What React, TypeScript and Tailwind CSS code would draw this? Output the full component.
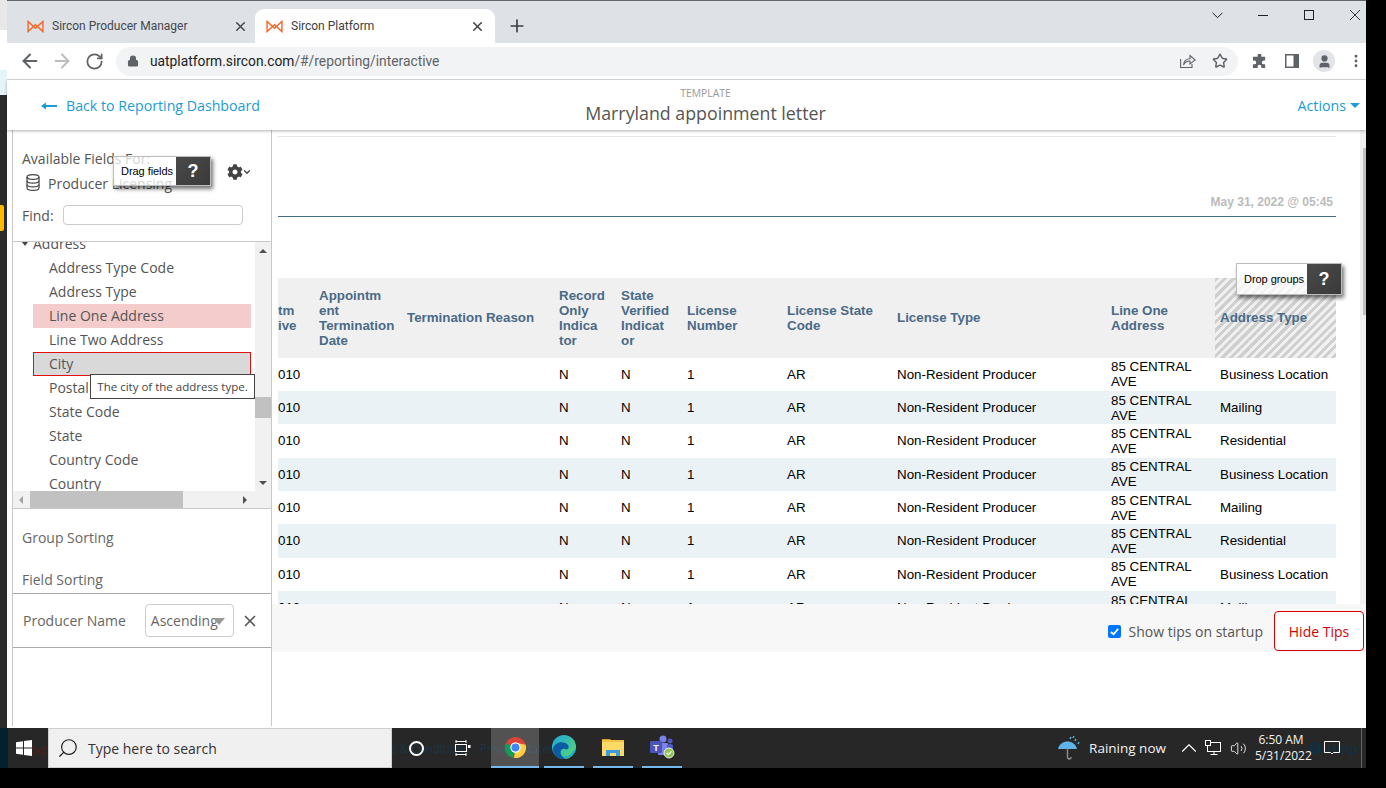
import React from 'react';
import {
  ArrowLeft,
  ArrowRight,
  ChevronDown,
  ChevronUp,
  EllipsisVertical,
  Lock,
  Plus,
  RotateCw,
  Search,
  Star,
  User,
  Volume2,
  X,
} from 'lucide-react';
import { FaCog } from 'react-icons/fa';

const openSans = "[font-family:'Open_Sans',sans-serif]";

const SirconLogo = ({ className = '' }: { className?: string }) => (
  <svg viewBox="0 0 18 14" className={className} fill="none" stroke="currentColor" strokeWidth="1.5">
    <path d="M1 1.5 L1 12.5 L9 5 L17 12.5 L17 1.5 L9 9 Z" />
  </svg>
);

const fields = ['Address Type Code', 'Address Type', 'Line One Address', 'Line Two Address', 'City', 'Postal', 'State Code', 'State', 'Country Code', 'Country'];

const rowTypes = ['Business Location', 'Mailing', 'Residential', 'Business Location', 'Mailing', 'Residential', 'Business Location', 'Mailing'];

const gridCols = 'grid grid-cols-[36px_88px_152px_62px_66px_100px_110px_214px_109px_121px]';

const Tip = ({ label, className }: { label: string; className: string }) => (
  <div className={`absolute flex border border-[#bdbdbd] bg-white/75 shadow-[2px_3px_4px_rgba(0,0,0,0.55)] ${className}`}>
    <div className="flex-1 flex items-center pl-[7px] text-[11px] text-black [font-family:'Liberation_Sans',sans-serif] tracking-[-0.05px] whitespace-nowrap">{label}</div>
    <div className="w-[34px] flex items-center justify-center bg-gradient-to-br from-[#4a4a4a] to-[#3a3a3a] text-white text-[18px] font-bold [font-family:'Liberation_Sans',sans-serif]">?</div>
  </div>
);

const Header = ({ children, className = '' }: { children: React.ReactNode; className?: string }) => (
  <div className={`flex items-center pl-[5px] pb-[0.6px] text-[13.33px] leading-[15px] font-bold text-[#4a6a88] ${className}`}>
    <div>{children}</div>
  </div>
);

const BrowserChrome = () => (
  <>
    <div className="h-[43px] bg-[#dee1e6] border-t border-[#666] flex items-end relative">
      <div className="w-[248px] h-[34px] flex items-center text-[12px] text-[#45484d] [font-family:Roboto,sans-serif]">
        <SirconLogo className="w-[17px] h-[13px] ml-[20px] text-[#f2682a]" />
        <span className="ml-[8px]">Sircon Producer Manager</span>
        <X size={15} strokeWidth={2.4} className="ml-auto mr-[7px] text-[#45484d]" />
      </div>
      <div className="w-[240px] h-[34px] bg-white rounded-t-[9px] flex items-center text-[12px] text-[#3c4043] [font-family:Roboto,sans-serif]">
        <SirconLogo className="w-[17px] h-[13px] ml-[11px] text-[#f2682a]" />
        <span className="ml-[8px]">Sircon Platform</span>
        <X size={15} strokeWidth={2.4} className="ml-auto mr-[10px] text-[#3c4043]" />
      </div>
      <Plus size={20} strokeWidth={2} className="ml-[12px] mb-[7px] text-[#3c4043]" />
      <div className="ml-auto h-[28px] self-start flex items-center text-[#222]">
        <div className="w-[46px] flex justify-center">
          <svg viewBox="0 0 10 6" className="w-[11px] h-[7px]" fill="none" stroke="currentColor" strokeWidth="0.9"><path d="M0.5 0.5 L5 5 L9.5 0.5" /></svg>
        </div>
        <div className="w-[46px] flex justify-center">
          <div className="w-[10px] h-[1px] bg-[#222]" />
        </div>
        <div className="w-[46px] flex justify-center">
          <div className="w-[10px] h-[10px] border border-[#222]" />
        </div>
        <div className="w-[34px] pl-[18px]">
          <svg viewBox="0 0 10 10" className="w-[10px] h-[10px]" fill="none" stroke="currentColor" strokeWidth="0.9"><path d="M0 0 L10 10 M10 0 L0 10" /></svg>
        </div>
      </div>
    </div>
    <div className="h-[37px] bg-white border-b border-[#dadce0] flex items-center">
      <div className="w-[32px] ml-[7px] flex justify-center"><ArrowLeft size={22} strokeWidth={2.2} className="text-[#5f6368]" /></div>
      <div className="w-[32px] flex justify-center"><ArrowRight size={22} strokeWidth={2.2} className="text-[#bcbdbf]" /></div>
      <div className="w-[32px] flex justify-center"><RotateCw size={19} strokeWidth={2.2} className="text-[#5f6368]" /></div>
      <div className="ml-[6px] w-[1122px] h-[29px] rounded-full bg-[#f1f3f4] flex items-center">
        <Lock size={12} fill="#5f6368" strokeWidth={2.2} className="ml-[11px] text-[#5f6368]" />
        <span className="ml-[11px] text-[13.8px] text-[#202124] [font-family:Roboto,sans-serif]">
          uatplatform.sircon.com<span className="text-[#5f6368]">/#/reporting/interactive</span>
        </span>
        <svg viewBox="0 0 16 16" className="ml-auto w-[16px] h-[16px] text-[#5f6368]" fill="none" stroke="currentColor" strokeWidth="1.1">
          <path d="M0.6 6 V14.5 H12 V11" />
          <path d="M3.5 12 C4 7.5 7 5.8 10 5.8 V2.5 L15.2 7 L10 11 V8 C7.5 8 5 9 3.5 12 Z" />
        </svg>
        <Star size={16} strokeWidth={2.2} className="ml-[16px] mr-[10px] text-[#5f6368]" />
      </div>
      <svg viewBox="0 0 16 16" className="ml-[14px] w-[15px] h-[15px] text-[#5f6368]" fill="currentColor">
        <path d="M6 1.5a2 2 0 0 1 4 0V3h4v4h-1.5a2 2 0 0 0 0 4H14v4h-4v-1.5a2 2 0 0 0-4 0V15H1v-4h1.5a2 2 0 0 0 0-4H1V3h5z" />
      </svg>
      <svg viewBox="0 0 14 14" className="ml-[18px] w-[14px] h-[14px]">
        <rect width="14" height="14" fill="#5f6368" />
        <rect x="1.5" y="1.5" width="7" height="11" fill="#fff" />
      </svg>
      <div className="ml-[14px] w-[22px] h-[22px] rounded-full bg-[#e2e4e8] flex items-center justify-center">
        <User size={15} fill="#5f6368" className="text-[#5f6368]" />
      </div>
      <EllipsisVertical size={16} strokeWidth={2.4} className="ml-[13px] text-[#5f6368]" />
    </div>
  </>
);

const AppHeader = () => (
  <div className={`h-[50px] pt-[2px] bg-white relative z-10 shadow-[0_1px_3px_rgba(0,0,0,0.3)] flex items-center justify-between ${openSans}`}>
    <div className="flex items-center ml-[34px] text-[#1b9cd8] text-[14.2px]">
      <svg viewBox="0 0 16 8" className="w-[16px] h-[8px]" fill="currentColor">
        <path d="M0 4 L5 0.5 V3 H16 V5 H5 V7.5 Z" />
      </svg>
      <span className="ml-[9px]">Back to Reporting Dashboard</span>
    </div>
    <div className="absolute left-[38px] right-0 top-0 text-center pointer-events-none">
      <div className="text-[10.4px] leading-[13px] mt-[7px] text-[#999]">TEMPLATE</div>
      <div className="text-[17.8px] leading-[26px] text-[#555]">Marryland appoinment letter</div>
    </div>
    <div className="flex items-center mr-[6px] text-[#1b9cd8] text-[14.2px]">
      Actions
      <span className="ml-[4px] w-0 h-0 border-x-[5px] border-x-transparent border-t-[5px] border-t-[#1b9cd8]" />
    </div>
  </div>
);

const Sidebar = () => (
  <div className={`w-[260px] mb-[2px] ml-[5px] border-x border-[#c8c8c8] bg-white flex flex-col relative text-[14px] text-[#555] ${openSans}`}>
    <div className="h-[112px] border-b border-[#c8c8c8] relative">
      <div className="absolute left-[9px] top-[19px] leading-[20px]">Available Fields For:</div>
      <svg viewBox="0 0 14 17" className="absolute left-[13px] top-[44px] w-[14px] h-[17px] text-[#444]" fill="none" stroke="currentColor" strokeWidth="1.2">
        <ellipse cx="7" cy="3" rx="6" ry="2.4" />
        <path d="M1 3 V14 C1 15.4 3.7 16.4 7 16.4 C10.3 16.4 13 15.4 13 14 V3" />
        <path d="M1 6.8 C1 8.2 3.7 9.2 7 9.2 C10.3 9.2 13 8.2 13 6.8" />
        <path d="M1 10.4 C1 11.8 3.7 12.8 7 12.8 C10.3 12.8 13 11.8 13 10.4" />
      </svg>
      <div className="absolute left-[35px] top-[44px] leading-[20px]">Producer Licensing</div>
      <FaCog size={16} className="absolute left-[214px] top-[34px] text-[#444]" />
      <ChevronDown size={10} strokeWidth={3} className="absolute left-[229px] top-[37px] text-[#444]" />
      <div className="absolute left-[9px] top-[76px] leading-[20px]">Find:</div>
      <div className="absolute left-[50px] top-[75px] w-[180px] h-[20px] rounded-[4px] border border-[#ccc]" />
      <Tip label="Drag fields" className="left-[100px] top-[26px] w-[98px] h-[30px]" />
    </div>
    <div className="h-[267px] border-b border-[#c8c8c8] flex flex-col">
      <div className="h-[249px] flex overflow-hidden">
        <div className="flex-1 overflow-hidden">
          <div className="-mt-[10px] h-[24px] pb-[1px] flex items-center pl-[9px]">
            <span className="w-0 h-0 border-x-[3px] border-x-transparent border-t-[4px] border-t-[#444]" />
            <span className="ml-[5px]">Address</span>
          </div>
          {fields.map((f) => (
            <div
              key={f}
              className={`ml-[20px] mr-[4px] h-[24px] pb-[1px] flex items-center ${
                f === 'Line One Address'
                  ? 'bg-[#f4cccc] pl-[16px]'
                  : f === 'City'
                  ? 'bg-[#d9d9d9] border border-[#e01010] pl-[15px]'
                  : 'pl-[16px]'
              }`}
            >
              {f}
            </div>
          ))}
        </div>
        <div className="w-[16px] bg-[#f1f1f1] relative flex flex-col items-center">
          <span className="absolute top-[7px] w-0 h-0 border-x-[4px] border-x-transparent border-b-[4px] border-b-[#505050]" />
          <div className="absolute top-[155px] w-[16px] h-[21px] bg-[#c1c1c1]" />
          <span className="absolute bottom-[6px] w-0 h-0 border-x-[4px] border-x-transparent border-t-[4px] border-t-[#505050]" />
        </div>
      </div>
      <div className="h-[17px] bg-[#f1f1f1] flex items-center relative">
        <span className="ml-[6px] w-0 h-0 border-y-[4px] border-y-transparent border-r-[4px] border-r-[#a3a3a3]" />
        <div className="ml-[7px] w-[153px] h-[17px] bg-[#c1c1c1]" />
        <span className="ml-[60px] w-0 h-0 border-y-[4px] border-y-transparent border-l-[4px] border-l-[#505050]" />
      </div>
    </div>
    <div className="h-[39px] flex items-end pl-[9px] text-[#666] leading-[20px]">Group Sorting</div>
    <div className="h-[42px] flex items-end pl-[9px] text-[#666] leading-[20px]">Field Sorting</div>
    <div className="h-[55px] mt-[3px] border-y border-[#aaa] flex items-center pl-[10px] text-[#666]">
      <span>Producer Name</span>
      <div className="ml-[19px] w-[89px] h-[33px] rounded-[4px] border border-[#ccc] flex items-center pl-[5px] relative">
        Ascending
        <span className="absolute right-[8px] top-[13px] w-0 h-0 border-x-[6px] border-x-transparent border-t-[7px] border-t-[#999]" />
      </div>
      <X size={18} strokeWidth={2.2} className="ml-[7px] text-[#555]" />
    </div>
    <div className="absolute left-[77px] top-[244px] h-[25px] w-[165px] bg-white border border-[#444] flex items-center justify-center text-[11.5px] text-[#444]">
      The city of the address type.
    </div>
  </div>
);

const ReportTable = () => (
  <div className="[font-family:'Liberation_Sans',sans-serif] text-[13.33px] leading-[15px] text-black">
    <div className={`${gridCols} h-[79.6px] bg-[#f0f0f0]`}>
      <Header className="!pl-0">tm<br />ive</Header>
      <Header>Appointm<br />ent<br />Termination<br />Date</Header>
      <Header>Termination Reason</Header>
      <Header>Record<br />Only<br />Indica<br />tor</Header>
      <Header>State<br />Verified<br />Indicat<br />or</Header>
      <Header>License<br />Number</Header>
      <Header>License State<br />Code</Header>
      <Header>License Type</Header>
      <Header>Line One<br />Address</Header>
      <Header className="bg-[repeating-linear-gradient(135deg,#cfcfcf_0,#cfcfcf_3px,#f0f0f0_3px,#f0f0f0_6px)]">Address Type</Header>
    </div>
    {rowTypes.map((type, i) => (
      <div key={i} className={`${gridCols} h-[33.33px] items-center ${i % 2 === 1 ? 'bg-[#ebf2f6]' : 'bg-white'}`}>
        <div>010</div>
        <div />
        <div />
        <div className="pl-[5px]">N</div>
        <div className="pl-[5px]">N</div>
        <div className="pl-[5px]">1</div>
        <div className="pl-[5px]">AR</div>
        <div className="pl-[5px]">Non-Resident Producer</div>
        <div className="pl-[5px]">85 CENTRAL<br />AVE</div>
        <div className="pl-[5px]">{type}</div>
      </div>
    ))}
  </div>
);

const Main = () => (
  <div className="flex-1 flex flex-col bg-white min-w-0">
    <div className="h-[474px] flex overflow-hidden relative">
      <div className="w-[1082px] ml-[6px] pt-[6px] overflow-hidden">
        <div className="h-[81px] border-t border-t-[#e5e5e5] border-b border-b-[#3f6b8c] w-[1058px] flex items-end justify-end pr-[3px] pb-[5px] text-[12px] font-bold text-[#bbb] [font-family:'Liberation_Sans',sans-serif]">
          May 31, 2022 @ 05:45
        </div>
        <div className="mt-[61px] w-[1058px]">
          <ReportTable />
        </div>
      </div>
      <div className="w-[6px] bg-[#f1f1f1] flex justify-end">
        <div className="w-[3px] h-[167px] mt-[18px] bg-[#c1c1c1]" />
      </div>
      <Tip label="Drop groups" className="left-[964px] top-[133px] w-[106px] h-[32px]" />
    </div>
    <div className="h-[48px] bg-[#f7f7f7] flex items-center relative">
      <div className={`ml-auto mr-[11px] pt-[6px] flex items-center text-[14px] text-[#555] ${openSans}`}>
        <span className="w-[13px] h-[13px] rounded-[2px] bg-[#0075ff] flex items-center justify-center">
          <svg viewBox="0 0 12 12" className="w-[11px] h-[11px]" fill="none" stroke="#fff" strokeWidth="2">
            <path d="M2 6.5 L5 9 L10 3" />
          </svg>
        </span>
        <span className="ml-[7px]">Show tips on startup</span>
      </div>
      <div className={`mr-[2px] mt-[3px] -mb-[3px] w-[90px] h-[40px] rounded-[4px] border border-[#d40000] bg-white flex items-center justify-center text-[14px] text-[#d40000] ${openSans}`}>
        Hide Tips
      </div>
    </div>
    <div className="flex-1" />
  </div>
);

const ChromeIcon = () => (
  <svg viewBox="0 0 24 24" className="w-[23px] h-[23px]">
    <circle cx="12" cy="12" r="11" fill="#db4437" />
    <path d="M12 12 L1.9 7.5 A11 11 0 0 0 10.5 22.9 Z" fill="#0f9d58" />
    <path d="M12 12 L10.5 22.9 A11 11 0 0 0 22.6 9 L12 7 Z" fill="#ffcd40" />
    <circle cx="12" cy="12" r="5.4" fill="#fff" />
    <circle cx="12" cy="12" r="4.2" fill="#4285f4" />
  </svg>
);

const EdgeIcon = () => (
  <svg viewBox="0 0 24 24" className="w-[24px] h-[24px]">
    <defs>
      <linearGradient id="edgeTop" x1="0" y1="0" x2="1" y2="1">
        <stop offset="0" stopColor="#1aa5dc" />
        <stop offset="1" stopColor="#5ddc6c" />
      </linearGradient>
    </defs>
    <circle cx="12" cy="12" r="12" fill="url(#edgeTop)" />
    <path d="M1 14 C2 7 12 5 16 10 C18 13 15 15 13 14 C9 13 7 17 10 21 C11 22.5 13 24 15 23.6 C8 25.5 1 21 1 14Z" fill="#0c59a4" />
    <path d="M24 14 C22 21 15 25 10 21 C13 22 19 21 21 16Z" fill="#1aa5dc" />
  </svg>
);

const FolderIcon = () => (
  <svg viewBox="0 0 22 20" className="w-[22px] h-[20px]">
    <path d="M0 2 H8 L10 4 H0 Z" fill="#d9a01f" />
    <rect x="0" y="3" width="22" height="16" fill="#ffd966" />
    <rect x="0" y="3" width="22" height="2" fill="#f0c24a" />
    <path d="M4 19 V13 H18 V19 H14 V16 H8 V19 Z" fill="#3b9ae0" />
  </svg>
);

const TeamsIcon = () => (
  <svg viewBox="0 0 26 24" className="w-[26px] h-[24px]">
    <circle cx="14" cy="4" r="3.5" fill="#7b83eb" />
    <circle cx="21" cy="6" r="2.5" fill="#5059c9" />
    <rect x="9" y="8" width="10" height="12" rx="1" fill="#7b83eb" />
    <rect x="18" y="9" width="6" height="9" rx="2" fill="#5059c9" />
    <rect x="1" y="6" width="12" height="12" rx="1" fill="#4b53bc" />
    <text x="7" y="15.5" textAnchor="middle" fontSize="9" fontWeight="700" fill="#fff" fontFamily="Liberation Sans">T</text>
    <circle cx="20" cy="18" r="5" fill="#92c353" stroke="#fff" strokeWidth="0.8" />
    <path d="M17.7 18 L19.4 19.7 L22.4 16.4" fill="none" stroke="#fff" strokeWidth="1.2" />
  </svg>
);

const TaskButton = ({ w, ml, active, children }: { w: string; ml: string; active?: boolean; children: React.ReactNode }) => (
  <div className={`relative h-[40px] flex items-center justify-center border-b-2 border-[#76b9ed] ${w} ${ml} ${active ? 'bg-white/20' : ''}`}>
    {children}
  </div>
);

const Taskbar = () => (
  <div className={`h-[40px] w-[1366px] bg-[#272727] flex items-stretch relative text-white ${openSans}`}>
    <div className="absolute left-[391px] top-[12px] text-[11.7px] text-[#1a3545] whitespace-nowrap">
      s &amp; Conditions<span className="ml-[10px]">Privacy Statement</span>
    </div>
    <div className="absolute left-[1309px] top-[10px] flex items-center text-[14px] font-semibold text-[#12303f] whitespace-nowrap">
      <span className="w-[13px] h-[13px] mr-[5px] rounded-full bg-[#12303f] text-[#272727] text-[10px] leading-[13px] text-center">?</span>
      Help
    </div>
    <SirconLogo className="absolute left-[28px] top-[17px] w-[20px] h-[12px] text-[#4a2018]" />
    <div className="w-[8px] bg-[#04202e]" />
    <div className="w-[40px] flex items-center pl-[8px] relative">
      <svg viewBox="0 0 16 16" className="w-[16px] h-[16px]" fill="#fff">
        <path d="M0 2.3 L7 1.3 V7.5 H0Z M8 1.1 L16 0 V7.5 H8Z M0 8.5 H7 V14.7 L0 13.7Z M8 8.5 H16 V16 L8 14.9Z" />
      </svg>
    </div>
    <div className="relative w-[344px] bg-[#f0f0f0] border border-[#cfcfcf] flex items-center text-[#333] text-[14px]">
      <Search size={22} strokeWidth={1.3} className="ml-[8px] -scale-x-100 text-[#222]" />
      <span className="ml-[9px]">Type here to search</span>
    </div>
    <div className="relative flex items-center ml-[17px]">
      <span className="w-[15px] h-[15px] rounded-full border-2 border-white" />
    </div>
    <div className="relative flex items-center ml-[31px]">
      <svg viewBox="0 0 16 16" className="w-[16px] h-[16px]" fill="none" stroke="#fff" strokeWidth="1">
        <path d="M1 1.5 H11 M1 14.5 H11 M11 0 V3 M11 13 V16 M1 0 V3 M1 13 V16" />
        <rect x="0.5" y="4.5" width="11" height="7" />
        <rect x="13" y="5" width="2.5" height="3" fill="#fff" stroke="none" />
      </svg>
    </div>
    <TaskButton w="w-[48px]" ml="ml-[20px]" active><ChromeIcon /></TaskButton>
    <TaskButton w="w-[40px]" ml="ml-[5px]"><EdgeIcon /></TaskButton>
    <TaskButton w="w-[40px]" ml="ml-[9px]"><FolderIcon /></TaskButton>
    <TaskButton w="w-[40px]" ml="ml-[9px]"><TeamsIcon /></TaskButton>
    <div className="ml-auto flex items-center relative">
      <svg viewBox="0 0 24 26" className="w-[24px] h-[26px] mr-[8px]">
        <path d="M1 14 C3 4 18 4 20 14 Z" fill="#5fb3e8" />
        <path d="M10.5 13 V22 C10.5 24.5 14 24.5 14 22" stroke="#8c8c8c" strokeWidth="1.5" fill="none" />
        <path d="M14 2 L13 4 M19 4 L18 6 M22 7 L21 9 M17 1 L16 3" stroke="#5fb3e8" strokeWidth="1.4" />
      </svg>
      <span className="mt-[1px] text-[13.5px] text-[#f2f2f2] mr-[10px]">Raining now</span>
      <ChevronUp size={26} strokeWidth={1} className="mr-[3px] text-white" />
      <svg viewBox="0 0 16 16" className="w-[16px] h-[16px] mr-[9px]" fill="none" stroke="#fff" strokeWidth="1">
        <rect x="2.5" y="2.5" width="13" height="9" />
        <path d="M9 11.5 V14.5 M5.5 14.5 H12.5" />
        <rect x="0.5" y="0.5" width="5" height="5" fill="#272727" />
      </svg>
      <Volume2 size={17} strokeWidth={1.2} className="mr-[8px] text-white" />
      <div className="w-[52px] text-center text-[12px] leading-[16px] text-[#f2f2f2] whitespace-nowrap">6:50 AM<br />5/31/2022</div>
      <svg viewBox="0 0 16 16" className="w-[16px] h-[16px] ml-[17px] mr-[26px]" fill="none" stroke="#fff" strokeWidth="1">
        <path d="M0.5 1.5 H15.5 V12.5 H9.5 L8 14 L6.5 12.5 H0.5 Z" />
      </svg>
      <div className="absolute right-[4px] top-[0px] h-[40px] w-[1px] bg-[#666]" />
    </div>
  </div>
);

const App = () => (
  <div className="w-[1386px] h-[788px] bg-black overflow-hidden flex flex-col">
    <div className="h-[728px] flex w-[1366px]">
      <div className="w-[7px] flex flex-col shrink-0">
        <div className="h-[30px] bg-[#e8e8e8]" />
        <div className="h-[40px] bg-white" />
        <div className="h-[25px] bg-[#e5f3fb]" />
        <div className="flex-1 bg-[#2b2b2b] relative">
          <div className="absolute left-0 top-[110px] w-[4px] h-[26px] rounded-r-[2px] bg-[#ffb900]" />
        </div>
      </div>
      <div className="flex-1 flex flex-col min-w-0">
        <BrowserChrome />
        <AppHeader />
        <div className="flex-1 flex bg-white min-h-0">
          <Sidebar />
          <Main />
        </div>
      </div>
    </div>
    <Taskbar />
  </div>
);

export default App;
